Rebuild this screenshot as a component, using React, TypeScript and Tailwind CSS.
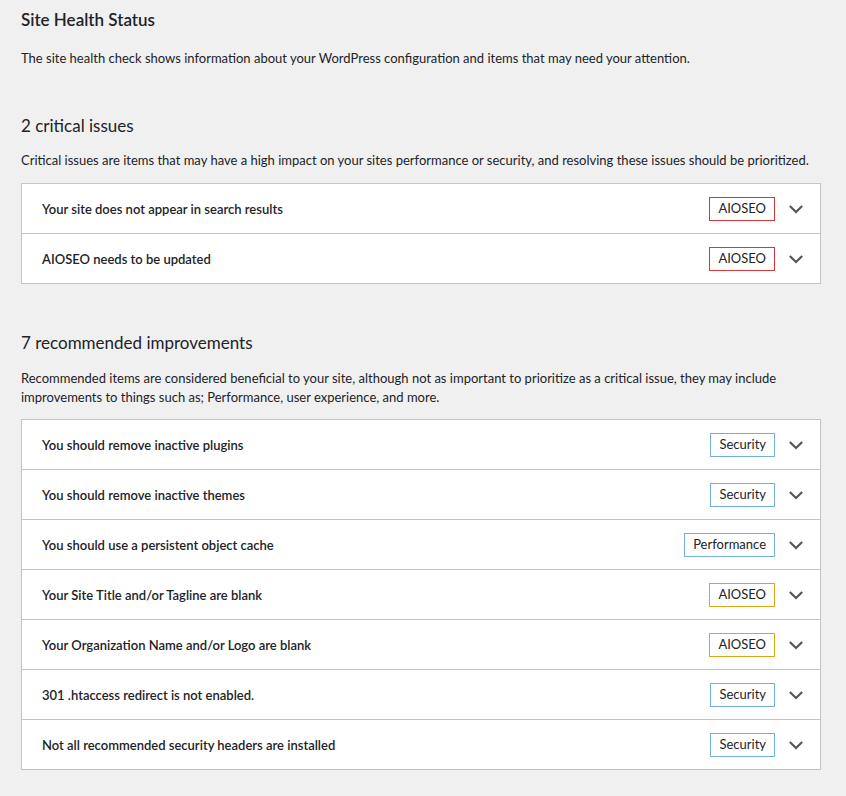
import React from "react";

type Item = { title: string; badge: string; color: "red" | "blue" | "orange" };

const critical: Item[] = [
  { title: "Your site does not appear in search results", badge: "AIOSEO", color: "red" },
  { title: "AIOSEO needs to be updated", badge: "AIOSEO", color: "red" },
];

const recommended: Item[] = [
  { title: "You should remove inactive plugins", badge: "Security", color: "blue" },
  { title: "You should remove inactive themes", badge: "Security", color: "blue" },
  { title: "You should use a persistent object cache", badge: "Performance", color: "blue" },
  { title: "Your Site Title and/or Tagline are blank", badge: "AIOSEO", color: "orange" },
  { title: "Your Organization Name and/or Logo are blank", badge: "AIOSEO", color: "orange" },
  { title: "301 .htaccess redirect is not enabled.", badge: "Security", color: "blue" },
  { title: "Not all recommended security headers are installed", badge: "Security", color: "blue" },
];

const badgeBorder = {
  red: "border-[#d63638]",
  blue: "border-[#72aee6]",
  orange: "border-[#dba617]",
};

function Chevron() {
  return (
    <svg width="14" height="10" viewBox="0 0 14 10" className="ml-[14px] shrink-0">
      <path d="M0.8 2 L7 8 L13.2 2" fill="none" stroke="#50575e" strokeWidth="2.2" />
    </svg>
  );
}

function Row({ item, first }: { item: Item; first: boolean }) {
  return (
    <div
      className={`flex items-center pl-[20px] pr-[17px] ${first ? "h-[49px]" : "h-[50px] border-t border-[#c3c4c7]"}`}
    >
      <span className="mt-[2px] flex-1 text-[13px] font-semibold text-[#1d2327]">{item.title}</span>
      <span
        className={`flex h-[24px] items-center border px-[8px] text-[13px] text-[#1d2327] ${badgeBorder[item.color]}`}
      >
        {item.badge}
      </span>
      <Chevron />
    </div>
  );
}

function Box({ items }: { items: Item[] }) {
  return (
    <div className="border border-[#c3c4c7] bg-white">
      {items.map((it, i) => (
        <Row key={i} item={it} first={i === 0} />
      ))}
    </div>
  );
}

export default function App() {
  return (
    <div
      className="min-h-[796px] w-[846px] bg-[#f0f0f1] pl-[21px] pr-[25px] pt-[9px] text-[#1d2327]"
      style={{ fontFamily: "Lato, 'Noto Sans', sans-serif" }}
    >
      <h2 className="text-[17px] font-semibold leading-[22px]">Site Health Status</h2>
      <p className="mt-[18px] text-[13px] leading-[19.5px]">
        The site health check shows information about your WordPress configuration and items that may need your attention.
      </p>

      <h3 className="mt-[46px] text-[17px] font-normal leading-[22px]">2 critical issues</h3>
      <p className="mt-[14px] text-[13px] leading-[19.5px]">
        Critical issues are items that may have a high impact on your sites performance or security, and resolving these issues should be prioritized.
      </p>
      <div className="mt-[13px]">
        <Box items={critical} />
      </div>

      <h3 className="mt-[48px] text-[17px] font-normal leading-[22px]">7 recommended improvements</h3>
      <p className="mt-[15px] text-[13px] leading-[19px]">
        Recommended items are considered beneficial to your site, although not as important to prioritize as a critical issue, they may include improvements to things such as; Performance, user experience, and more.
      </p>
      <div className="mt-[12px]">
        <Box items={recommended} />
      </div>
    </div>
  );
}
